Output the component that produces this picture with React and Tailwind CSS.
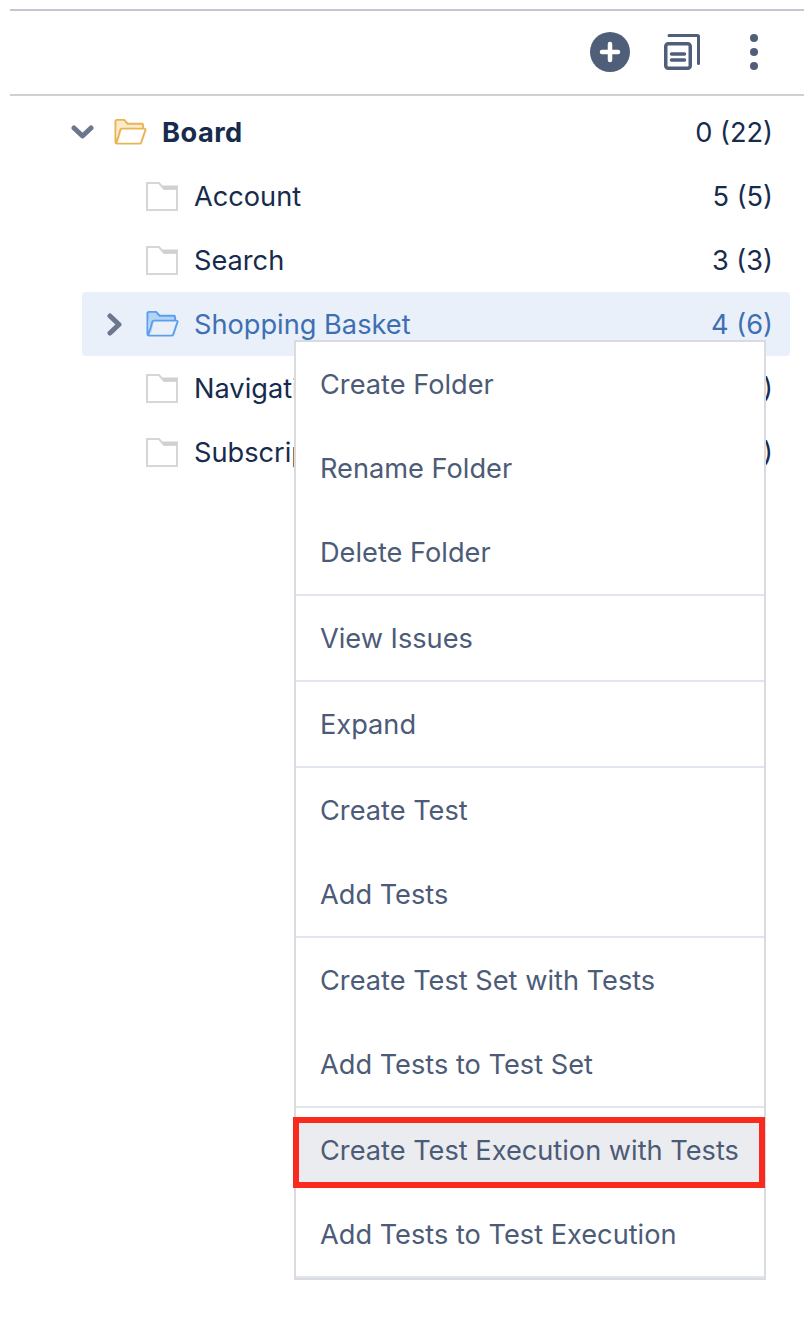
const font = { fontFamily: "Inter, 'Noto Sans', sans-serif" };

function OpenFolder({ stroke, fill }) {
  return (
    <svg width="33" height="28" viewBox="0 0 34 28" fill="none">
      <path d="M2 7V3a1.5 1.5 0 0 1 1.5-1.5h7.5l3.500 4h14A1.500 1.500 0 0 1 30 7v3H8.500L5 24" fill={fill} />
      <path d="M8 10.500h23.500a1 1 0 0 1 1 1.300L28 25a1.500 1.500 0 0 1-1.400 1H3a1.500 1.500 0 0 1-1.500-1.500V3A1.500 1.500 0 0 1 3 1.500h7.500l3.500 4h14.500A1.500 1.500 0 0 1 30 7v3.500M8 10.500a1.500 1.500 0 0 0-1.400 1L2.500 25" stroke={stroke} strokeWidth="2" strokeLinejoin="round" />
    </svg>
  );
}

function ClosedFolder() {
  return (
    <svg width="32" height="29" viewBox="0 0 32 29" fill="none">
      <path d="M1 1h12l5 6h13v21H1z" fill="#fff" stroke="#d6d6d6" strokeWidth="2" />
      <path d="M13.500 1 18.500 7H32V3.500H16z" fill="#d0d0d0" />
    </svg>
  );
}

function TreeRow({ label, count }) {
  return (
    <div className="flex h-16 items-center pl-[146px] pr-[31px] text-[#172b4d]">
      <ClosedFolder />
      <span className="ml-4 flex-1 whitespace-nowrap pt-[2px]">{label}</span>
      <span className="pt-[2px]">{count}</span>
    </div>
  );
}

function MenuItem({ children }) {
  return <div className="flex h-[84px] items-center px-6 pt-[2px]">{children}</div>;
}

function Divider() {
  return <div className="h-[2px] bg-[#e1e5f0]" />;
}

export default function App() {
  return (
    <div className="relative h-[1326px] w-[804px] overflow-hidden bg-white text-[27.2px]" style={font}>
      <div className="mt-[9px] ml-[10px] h-[2px] bg-[#c4c6d3]" />
      <div className="flex h-[83px] items-center justify-end ml-[10px] pb-px">
        <svg className="mr-[33px]" width="42" height="42" viewBox="0 0 42 42">
          <circle cx="21" cy="21" r="20" fill="#505f79" />
          <path d="M21 13v16M13 21h16" stroke="#fff" strokeWidth="4.500" strokeLinecap="round" />
        </svg>
        <svg className="mr-[50px]" width="36" height="36" viewBox="0 0 36 36" fill="none">
          <path d="M5 1.500h28.500a1 1 0 0 1 1 1v27" stroke="#505f79" strokeWidth="3" strokeLinecap="round" />
          <rect x="1.750" y="9.750" width="24.500" height="24.500" rx="2.500" stroke="#505f79" strokeWidth="3.500" />
          <path d="M7.500 20h13M7.500 26h13" stroke="#505f79" strokeWidth="3.500" strokeLinecap="round" />
        </svg>
        <div className="mr-[46px] flex flex-col gap-[6px]">
          <div className="size-2 rounded-full bg-[#505f79]" />
          <div className="size-2 rounded-full bg-[#505f79]" />
          <div className="size-2 rounded-full bg-[#505f79]" />
        </div>
      </div>
      <div className="ml-[10px] h-[2px] bg-[#cfcfd4]" />

      <div className="pt-[4px]">
        <div className="flex h-16 items-center pr-[31px] text-[#172b4d]">
          <svg className="ml-[71px]" width="23" height="14" viewBox="0 0 23 14" fill="none">
            <path d="M3 3l8.500 8L20 3" stroke="#6b778c" strokeWidth="5" strokeLinecap="round" strokeLinejoin="round" />
          </svg>
          <span className="ml-[20px]"><OpenFolder stroke="#e8b556" fill="#fcebc9" /></span>
          <span className="ml-[15px] flex-1 pt-[2px] font-bold tracking-[0.5px]">Board</span>
          <span className="pt-[2px]">0 (22)</span>
        </div>
        <TreeRow label="Account" count="5 (5)" />
        <TreeRow label="Search" count="3 (3)" />
        <div className="ml-[82px] mr-[14px] flex h-16 items-center rounded bg-[#e9f0f9] pr-[17px] text-[#3e6fb3]">
          <svg className="ml-[25px]" width="16" height="23" viewBox="0 0 16 23" fill="none">
            <path d="M3 3l9 8.500L3 20" stroke="#6b778c" strokeWidth="5" strokeLinecap="round" strokeLinejoin="round" />
          </svg>
          <span className="ml-[23px]"><OpenFolder stroke="#5c9ff0" fill="#b3d4f2" /></span>
          <span className="ml-[15px] flex-1 pt-[2px]">Shopping Basket</span>
          <span className="pt-[2px]">4 (6)</span>
        </div>
        <TreeRow label="Navigation" count="4 (4)" />
        <TreeRow label="Subscription" count="4 (4)" />
      </div>

      <div className="absolute left-[294px] top-[340px] w-[472px] border-2 border-[#dadbdf] bg-white text-[#4c5b77]">
        <MenuItem>Create Folder</MenuItem>
        <MenuItem>Rename Folder</MenuItem>
        <MenuItem>Delete Folder</MenuItem>
        <Divider />
        <MenuItem>View Issues</MenuItem>
        <Divider />
        <MenuItem>Expand</MenuItem>
        <Divider />
        <MenuItem>Create Test</MenuItem>
        <MenuItem>Add Tests</MenuItem>
        <Divider />
        <MenuItem>Create Test Set with Tests</MenuItem>
        <MenuItem>Add Tests to Test Set</MenuItem>
        <Divider />
        <div className="relative flex h-[84px] items-center px-6 pt-[2px]">
          <div className="absolute -left-[3px] -right-[1px] top-[9px] h-[71px] border-[6px] border-[#fb2a1f] bg-[#ebecf0]" />
          <span className="relative">Create Test Execution with Tests</span>
        </div>
        <MenuItem>Add Tests to Test Execution</MenuItem>
        <Divider />
      </div>
    </div>
  );
}
